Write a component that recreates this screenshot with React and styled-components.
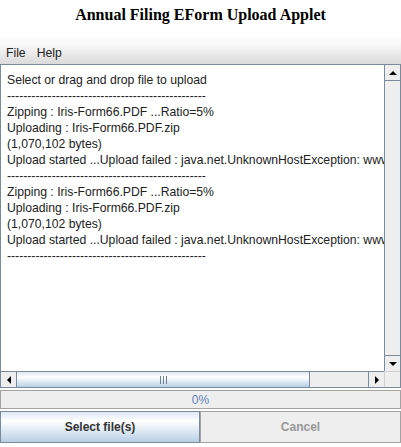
import React from "react";
import styled, { createGlobalStyle } from "styled-components";

const GlobalStyle = createGlobalStyle`
  html, body {
    margin: 0;
    padding: 0;
    background: #ffffff;
  }
  body {
    font-family: "Liberation Sans", Arial, sans-serif;
  }
`;

const dashes = "-".repeat(49);

const logLines = [
  "Select or drag and drop file to upload",
  dashes,
  "Zipping : Iris-Form66.PDF ...Ratio=5%",
  "Uploading : Iris-Form66.PDF.zip",
  "(1,070,102 bytes)",
  "Upload started ...Upload failed : java.net.UnknownHostException: www",
  dashes,
  "Zipping : Iris-Form66.PDF ...Ratio=5%",
  "Uploading : Iris-Form66.PDF.zip",
  "(1,070,102 bytes)",
  "Upload started ...Upload failed : java.net.UnknownHostException: www",
  dashes,
];

function Arrow({ dir }) {
  const points = {
    up: "0,6 4,2 8,6",
    down: "0,2 8,2 4,6",
    left: "6,0 6,8 2,4",
    right: "2,0 2,8 6,4",
  };
  return (
    <svg width="8" height="8" viewBox="0 0 8 8">
      <polygon points={points[dir]} fill="#000" />
    </svg>
  );
}

function App() {
  return (
    <>
      <GlobalStyle />
      <Page>
        <Title>Annual Filing EForm Upload Applet</Title>
        <MenuBar>
          <MenuItem>File</MenuItem>
          <MenuItem>Help</MenuItem>
        </MenuBar>
        <ScrollPane>
          <TextArea>
            {logLines.map((line, i) => (
              <Line key={i}>{line}</Line>
            ))}
          </TextArea>
          <VScroll>
            <ArrowButton $side="top">
              <Arrow dir="up" />
            </ArrowButton>
            <Track />
            <ArrowButton $side="bottom">
              <Arrow dir="down" />
            </ArrowButton>
          </VScroll>
          <HScroll>
            <ArrowButton $side="left">
              <Arrow dir="left" />
            </ArrowButton>
            <HTrack>
              <Thumb style={{ width: "83.5%" }}>
                <Grip>
                  <span />
                  <span />
                  <span />
                </Grip>
              </Thumb>
            </HTrack>
            <ArrowButton $side="right">
              <Arrow dir="right" />
            </ArrowButton>
          </HScroll>
          <Corner />
        </ScrollPane>
        <Progress>0%</Progress>
        <ButtonRow>
          <ActionButton>Select file(s)</ActionButton>
          <ActionButton disabled>Cancel</ActionButton>
        </ButtonRow>
      </Page>
    </>
  );
}

const Page = styled.div`
  width: 401px;
  height: 447px;
  display: flex;
  flex-direction: column;
  overflow: hidden;
`;

const Title = styled.h1`
  margin: 0;
  height: 36px;
  padding-top: 6px;
  box-sizing: border-box;
  font-family: "Liberation Serif", "Times New Roman", serif;
  font-weight: bold;
  font-size: 16px;
  line-height: 18px;
  text-align: center;
  color: #000;
`;

const MenuBar = styled.div`
  height: 28px;
  display: flex;
  align-items: flex-end;
  gap: 11px;
  padding: 0 0 3px 6px;
  box-sizing: border-box;
  background: linear-gradient(to bottom, #ffffff 0%, #f4f4f4 40%, #dadada 100%);
`;

const MenuItem = styled.span`
  font-size: 12.2px;
  line-height: 16px;
  color: #222;
`;

const ScrollPane = styled.div`
  width: 401px;
  height: 324px;
  box-sizing: border-box;
  border: 1px solid #7a8a99;
  display: grid;
  grid-template-columns: 1fr 16px;
  grid-template-rows: 1fr 16px;
  background: #fff;
`;

const TextArea = styled.div`
  padding: 7px 0 0 6px;
  overflow: hidden;
  background: #fff;
`;

const Line = styled.div`
  white-space: pre;
  font-size: 12.2px;
  line-height: 16px;
  color: #222;
`;

const VScroll = styled.div`
  display: flex;
  flex-direction: column;
  background: #eeeeee;
  border-left: 1px solid #7a8a99;
`;

const HScroll = styled.div`
  display: flex;
  background: #eeeeee;
  border-top: 1px solid #7a8a99;
`;

const Corner = styled.div`
  background: #eeeeee;
  border-top: 1px solid #d0d0d0;
  border-left: 1px solid #d0d0d0;
`;

const ArrowButton = styled.div`
  flex: 0 0 15px;
  display: flex;
  align-items: center;
  justify-content: center;
  background: #eeeeee;
  ${({ $side }) =>
    $side === "top"
      ? "border-bottom: 1px solid #7a8a99;"
      : $side === "bottom"
      ? "border-top: 1px solid #7a8a99;"
      : $side === "left"
      ? "border-right: 1px solid #7a8a99;"
      : "border-left: 1px solid #7a8a99;"}
`;

const Track = styled.div`
  flex: 1;
`;

const HTrack = styled.div`
  flex: 1;
  display: flex;
`;

const Thumb = styled.div`
  height: 100%;
  box-sizing: border-box;
  border-right: 1px solid #7a8a99;
  background: linear-gradient(to bottom, #dde8f3 0%, #ffffff 35%, #b8cfe5 100%);
  display: flex;
  align-items: center;
  justify-content: center;
`;

const Grip = styled.div`
  display: flex;
  gap: 2px;
  span {
    width: 1px;
    height: 8px;
    background: #6d7f92;
  }
`;

const Progress = styled.div`
  margin-top: 2px;
  height: 19px;
  box-sizing: border-box;
  border: 1px solid #a3a3a3;
  background: #eeeeee;
  display: flex;
  align-items: center;
  justify-content: center;
  font-size: 12px;
  color: #6382bf;
`;

const ButtonRow = styled.div`
  margin-top: 2px;
  display: grid;
  grid-template-columns: 200px 201px;
  height: 32px;
`;

const ActionButton = styled.button`
  margin: 0;
  box-sizing: border-box;
  height: 32px;
  font-family: "Liberation Sans", Arial, sans-serif;
  font-weight: bold;
  font-size: 12px;
  border: 1px solid ${({ disabled }) => (disabled ? "#a3a3a3" : "#7a8a99")};
  border-radius: 0;
  color: ${({ disabled }) => (disabled ? "#999999" : "#333333")};
  background: ${({ disabled }) =>
    disabled
      ? "#eeeeee"
      : "linear-gradient(to bottom, #dde8f3 0%, #ffffff 30%, #b8cfe5 100%)"};
`;

export default App;
